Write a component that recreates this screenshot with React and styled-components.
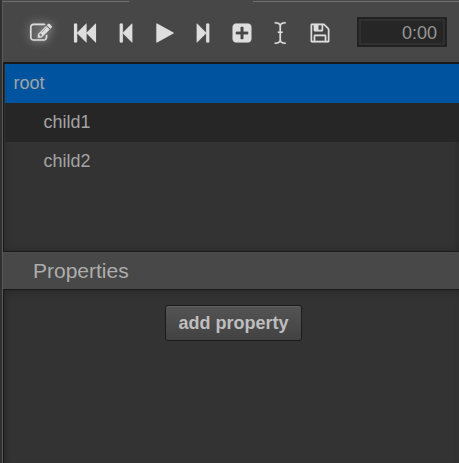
import React from "react";
import styled, { createGlobalStyle } from "styled-components";

const GlobalStyle = createGlobalStyle`
  * { box-sizing: border-box; }
  body { margin: 0; overflow: hidden; background: #474747; }
`;

const Panel = styled.main`
  display: flex;
  flex-direction: column;
  width: 459px;
  height: 463px;
  padding-left: 3px;
  background: linear-gradient(to right, #303030 0 2px, #5a5a5a 2px 3px, #474747 3px);
  font-family: "Liberation Sans", Arial, sans-serif;
  color: #a3a3a3;
`;

const TabEdge = styled.div`
  display: flex;
  justify-content: space-between;
  height: 2px;
  padding-top: 1px;
`;

const EdgeLine = styled.span`
  width: ${(p) => p.$width}px;
  height: 1px;
  background: #707070;
`;

const Toolbar = styled.div`
  display: flex;
  align-items: flex-start;
  height: 60px;
  padding: 15px 12px 0 0;
`;

const ToolButton = styled.button`
  display: flex;
  flex: none;
  width: 22px;
  height: 22px;
  margin: 4.6px 0 0 ${(p) => p.$gap}px;
  padding: 0;
  border: 0;
  background: none;
  color: #dedede;
`;

const Glyph = styled.svg`
  display: block;
  width: 22px;
  height: 22px;
  overflow: visible;
  fill: currentColor;
  stroke: currentColor;
  stroke-width: 14;
  filter: ${(p) => (p.$lit ? "drop-shadow(0 0 5px rgba(255,255,255,.65))" : "none")};
`;

const TimeField = styled.div`
  width: 90px;
  height: 30px;
  margin-left: auto;
  padding-right: 8px;
  border: 2px solid #222;
  box-shadow: inset 0 0 0 2px #303030;
  background: #262626;
  color: #969696;
  font-size: 18px;
  line-height: 28px;
  text-align: right;
`;

const Tree = styled.div`
  height: 190px;
  border: solid #191919;
  border-width: 2px 0 1px 1px;
  background: #333;
  box-shadow: inset 0 0 9px #292929;
  font-size: 18px;
`;

const TreeRow = styled.div`
  height: 39px;
  margin-left: 1px;
  padding-left: ${(p) => 8.6 + p.$depth * 30}px;
  background: ${(p) => p.$fill};
  line-height: 38px;
`;

const SectionHeader = styled.div`
  height: 37px;
  padding-left: 30px;
  background: #484848;
  border-top: 1px solid #4d4d4d;
  color: #adadad;
  font-size: 21px;
  line-height: 35px;
`;

const Properties = styled.div`
  display: flex;
  flex: 1;
  justify-content: center;
  align-items: flex-start;
  padding: 15px 0 0 4px;
  border: solid #191919;
  border-width: 1px 0 0 1px;
  background: #333;
  box-shadow: inset 0 6px 9px -5px #272727, inset 5px 0 6px -5px #222;
`;

const AddButton = styled.button`
  width: 137px;
  height: 36px;
  padding: 0;
  border: 1px solid #1b1b1b;
  border-radius: 3px;
  background: linear-gradient(#545454, #424242);
  box-shadow: inset 0 1px #606060;
  color: #bebebe;
  font: bold 18px/32px "Liberation Sans", Arial, sans-serif;
`;

const tools = [
  { name: "Edit", gap: 26.6, lit: true, path: "M888 1184l116-116-152-152-116 116v56h96v96h56zm440-720q-16-16-33 1l-350 350q-17 17-1 33t33-1l350-350q17-17 1-33zm80 594v190q0 119-84.5 203.5t-203.5 84.5h-832q-119 0-203.5-84.5t-84.5-203.5v-832q0-119 84.5-203.5t203.5-84.5h832q63 0 117 25 15 7 18 23 3 17-9 29l-49 49q-14 14-32 8-23-6-45-6h-832q-66 0-113 47t-47 113v832q0 66 47 113t113 47h832q66 0 113-47t47-113v-126q0-13 9-22l64-64q15-15 35-7t20 29zm-96-738l288 288-672 672h-288v-288zm444 132l-92 92-288-288 92-92q28-28 68-28t68 28l152 152q28 28 28 68t-28 68z" },
  { name: "First frame", gap: 22.8, path: "M1747 141q19-19 32-13t13 32v1472q0 26-13 32t-32-13l-710-710q-9-9-13-19v710q0 26-13 32t-32-13l-710-710q-9-9-13-19v678q0 26-19 45t-45 19h-128q-26 0-45-19t-19-45v-1408q0-26 19-45t45-19h128q26 0 45 19t19 45v678q4-10 13-19l710-710q19-19 32-13t13 32v710q4-10 13-19z" },
  { name: "Previous frame", gap: 18.6, path: "M1363 141q19-19 32-13t13 32v1472q0 26-13 32t-32-13l-710-710q-9-9-13-19v678q0 26-19 45t-45 19h-128q-26 0-45-19t-19-45v-1408q0-26 19-45t45-19h128q26 0 45 19t19 45v678q4-10 13-19z" },
  { name: "Play", gap: 17.2, path: "M1576 927l-1328 738q-23 13-39.5 3t-16.5-36v-1472q0-26 16.5-36t39.5 3l1328 738q23 13 23 31t-23 31z" },
  { name: "Next frame", gap: 16.1, path: "M429 1651q-19 19-32 13t-13-32v-1472q0-26 13-32t32 13l710 710q9 9 13 19v-678q0-26 19-45t45-19h128q26 0 45 19t19 45v1408q0 26-19 45t-45 19h-128q-26 0-45-19t-19-45v-678q-4 10-13 19z" },
  { name: "Add", gap: 16.5, path: "M1408 960v-128q0-26-19-45t-45-19h-320v-320q0-26-19-45t-45-19h-128q-26 0-45 19t-19 45v320h-320q-26 0-45 19t-19 45v128q0 26 19 45t45 19h320v320q0 26 19 45t45 19h128q26 0 45-19t19-45v-320h320q26 0 45-19t19-45zm256-544v960q0 119-84.5 203.5t-203.5 84.5h-960q-119 0-203.5-84.5t-84.5-203.5v-960q0-119 84.5-203.5t203.5-84.5h960q119 0 203.5 84.5t84.5 203.5z" },
  { name: "Rename", gap: 17.1, path: "M1216 128q-320 0-320 224v416h128v128h-128v544q0 224 320 224h64v128h-64q-272 0-384-146-112 146-384 146h-64v-128h64q320 0 320-224v-544h-128v-128h128v-416q0-224-320-224h-64v-128h64q272 0 384 146 112-146 384-146h64v128h-64z" },
  { name: "Save", gap: 17.2, path: "M512 1536h768v-384h-768v384zm896 0h128v-896q0-14-10-38.5t-20-34.5l-281-281q-10-10-34-20t-39-10v416q0 40-28 68t-68 28h-576q-40 0-68-28t-28-68v-416h-128v1280h128v-416q0-40 28-68t68-28h832q40 0 68 28t28 68v416zm-384-928v-320q0-13-9.5-22.5t-22.5-9.5h-192q-13 0-22.5 9.5t-9.5 22.5v320q0 13 9.5 22.5t22.5 9.5h192q13 0 22.5-9.5t9.5-22.5zm640 32v928q0 40-28 68t-68 28h-1344q-40 0-68-28t-28-68v-1344q0-40 28-68t68-28h928q40 0 88 20t76 48l280 280q28 28 48 76t20 88z" },
];

const nodes = [
  { label: "root", depth: 0, fill: "#00549f" },
  { label: "child1", depth: 1, fill: "#262626" },
  { label: "child2", depth: 1, fill: "transparent" },
];

export default function App() {
  return (
    <>
      <GlobalStyle />
      <Panel>
        <TabEdge>
          <EdgeLine $width={126} />
          <EdgeLine $width={206} />
        </TabEdge>
        <Toolbar>
          {tools.map((t) => (
            <ToolButton key={t.name} aria-label={t.name} $gap={t.gap}>
              <Glyph viewBox="0 0 1792 1792" $lit={t.lit}>
                <path d={t.path} />
              </Glyph>
            </ToolButton>
          ))}
          <TimeField>0:00</TimeField>
        </Toolbar>
        <Tree>
          {nodes.map((n) => (
            <TreeRow key={n.label} $depth={n.depth} $fill={n.fill}>{n.label}</TreeRow>
          ))}
        </Tree>
        <SectionHeader>Properties</SectionHeader>
        <Properties>
          <AddButton>add property</AddButton>
        </Properties>
      </Panel>
    </>
  );
}
